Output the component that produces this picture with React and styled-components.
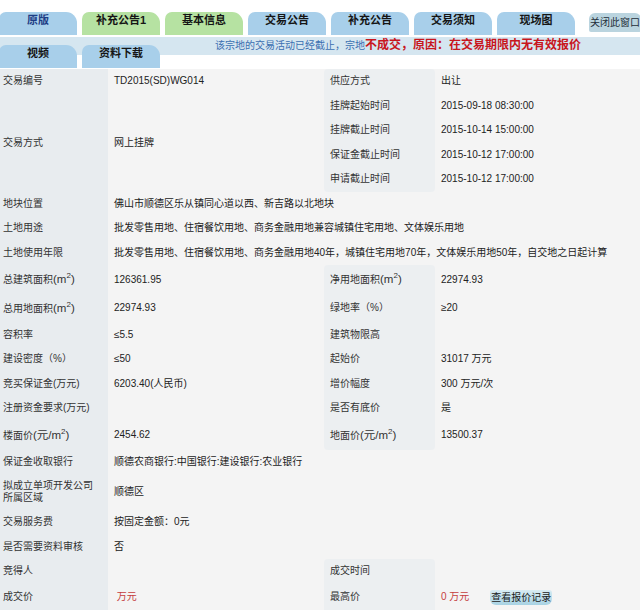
import React from "react";
import styled, { createGlobalStyle } from "styled-components";

const GlobalStyle = createGlobalStyle`
  body {
    margin: 0;
    background: #fff;
    font-family: "Liberation Sans", Arial, "Noto Sans CJK SC", sans-serif;
    font-size: 10px;
    color: #333;
  }
`;

const Page = styled.div`
  width: 640px;
  height: 610px;
  overflow: hidden;
  padding-top: 12px;
  box-sizing: border-box;
`;

const TabRow = styled.div`
  display: flex;
  gap: 5px;
  margin-left: -1px;
  align-items: flex-start;
`;

const Tab = styled.div`
  flex: none;
  width: 78px;
  height: 23px;
  box-sizing: border-box;
  padding-top: 1px;
  border-radius: 7px 11px 0 0;
  background: ${(p) => (p.$green ? "#b6e2a2" : "#a8cfea")};
  color: ${(p) => (p.$navy ? "#1d3d85" : "#151515")};
  font-size: 11px;
  font-weight: bold;
  line-height: 14px;
  text-align: center;
`;

const CloseTab = styled.div`
  flex: none;
  margin: 1px 0 0 9px;
  width: 52px;
  height: 19px;
  border-radius: 6px 6px 2px 2px;
  background: #bad4df;
  color: #1f2f3a;
  font-size: 10px;
  line-height: 19px;
  text-align: center;
`;

const SubRow = styled.div`
  display: flex;
  gap: 5px;
  margin: 2px 0 0 -1px;
  height: 31px;
  align-items: flex-end;
  background: linear-gradient(#d5e6f0 0 18px, transparent 18px);
`;

const Notice = styled.div`
  align-self: flex-start;
  margin-left: 50px;
  padding-top: 1px;
  line-height: 14px;
  white-space: nowrap;
  color: #3b6fb1;
  font-size: 10px;
`;

const NoticeStrong = styled.span`
  color: #c8161d;
  font-size: 12px;
  font-weight: bold;
`;

const Table = styled.table`
  width: 640px;
  margin-top: 1px;
  table-layout: fixed;
  border-collapse: separate;
  border-spacing: 0;
  background: #f4f4f4;
`;

const Row = styled.tr`
  height: ${(p) => p.$h || 24.5}px;
`;

const Label = styled.td`
  padding: 0 0 0 3px;
  background: #e8ecef;
  color: #333;
  line-height: 12px;
  vertical-align: middle;
`;

const Value = styled.td`
  padding: 0 0 0 6px;
  color: #222;
  line-height: 12px;
  vertical-align: middle;
  white-space: nowrap;
`;

const SideLabel = styled.td`
  padding: 0 0 0 6px;
  background: #eceff1;
  color: #333;
  line-height: 12px;
  vertical-align: middle;
  border-radius: ${(p) =>
    p.$round === "top" ? "4px 4px 0 0" : p.$round === "bottom" ? "0 0 4px 4px" : "0"};
`;

const Unit = styled.span`
  font-size: 11.5px;
`;

const Sup = styled.sup`
  font-size: 8px;
  line-height: 0;
  vertical-align: 5px;
`;

const Red = styled.span`
  color: #c53d3d;
`;

const QuoteButton = styled.span`
  display: inline-block;
  margin-left: 21px;
  padding: 0 1px;
  height: 15px;
  line-height: 15px;
  border-radius: 3px 3px 6px 6px;
  background: linear-gradient(#d9ecf3, #a7d2e3);
  color: #1a1a1a;
  font-size: 10px;
  vertical-align: middle;
`;

const M2 = () => (
  <Unit>
    (m<Sup>2</Sup>)
  </Unit>
);

const PerM2 = () => (
  <Unit>
    (元/m<Sup>2</Sup>)
  </Unit>
);

export default function App() {
  return (
    <Page>
      <GlobalStyle />
      <TabRow>
        <Tab $navy>原版</Tab>
        <Tab $green>补充公告1</Tab>
        <Tab $green>基本信息</Tab>
        <Tab>交易公告</Tab>
        <Tab>补充公告</Tab>
        <Tab>交易须知</Tab>
        <Tab>现场图</Tab>
        <CloseTab>关闭此窗口</CloseTab>
      </TabRow>
      <SubRow>
        <Tab>视频</Tab>
        <Tab>资料下载</Tab>
        <Notice>
          该宗地的交易活动已经截止，宗地
          <NoticeStrong>不成交，原因：在交易期限内无有效报价</NoticeStrong>
        </Notice>
      </SubRow>
      <Table>
        <colgroup>
          <col style={{ width: 108 }} />
          <col style={{ width: 216 }} />
          <col style={{ width: 111 }} />
          <col style={{ width: 205 }} />
        </colgroup>
        <tbody>
          <Row>
            <Label>交易编号</Label>
            <Value>TD2015(SD)WG014</Value>
            <SideLabel $round="top">供应方式</SideLabel>
            <Value>出让</Value>
          </Row>
          <Row>
            <Label rowSpan={4}>交易方式</Label>
            <Value rowSpan={4}>网上挂牌</Value>
            <SideLabel>挂牌起始时间</SideLabel>
            <Value>2015-09-18 08:30:00</Value>
          </Row>
          <Row>
            <SideLabel>挂牌截止时间</SideLabel>
            <Value>2015-10-14 15:00:00</Value>
          </Row>
          <Row>
            <SideLabel>保证金截止时间</SideLabel>
            <Value>2015-10-12 17:00:00</Value>
          </Row>
          <Row>
            <SideLabel $round="bottom">申请截止时间</SideLabel>
            <Value>2015-10-12 17:00:00</Value>
          </Row>
          <Row>
            <Label>地块位置</Label>
            <Value colSpan={3}>佛山市顺德区乐从镇同心道以西、新吉路以北地块</Value>
          </Row>
          <Row>
            <Label>土地用途</Label>
            <Value colSpan={3}>批发零售用地、住宿餐饮用地、商务金融用地兼容城镇住宅用地、文体娱乐用地</Value>
          </Row>
          <Row>
            <Label>土地使用年限</Label>
            <Value colSpan={3}>
              批发零售用地、住宿餐饮用地、商务金融用地40年，城镇住宅用地70年，文体娱乐用地50年，自交地之日起计算
            </Value>
          </Row>
          <Row $h={29}>
            <Label>
              总建筑面积<M2 />
            </Label>
            <Value>126361.95</Value>
            <SideLabel $round="top">
              净用地面积<M2 />
            </SideLabel>
            <Value>22974.93</Value>
          </Row>
          <Row $h={28.5}>
            <Label>
              总用地面积<M2 />
            </Label>
            <Value>22974.93</Value>
            <SideLabel>绿地率（%）</SideLabel>
            <Value>≥20</Value>
          </Row>
          <Row>
            <Label>容积率</Label>
            <Value>≤5.5</Value>
            <SideLabel>建筑物限高</SideLabel>
            <Value></Value>
          </Row>
          <Row>
            <Label>建设密度（%）</Label>
            <Value>≤50</Value>
            <SideLabel>起始价</SideLabel>
            <Value>31017 万元</Value>
          </Row>
          <Row>
            <Label>竞买保证金(万元)</Label>
            <Value>6203.40(人民币)</Value>
            <SideLabel>增价幅度</SideLabel>
            <Value>300 万元/次</Value>
          </Row>
          <Row>
            <Label>注册资金要求(万元)</Label>
            <Value></Value>
            <SideLabel>是否有底价</SideLabel>
            <Value>是</Value>
          </Row>
          <Row $h={29}>
            <Label>
              楼面价<PerM2 />
            </Label>
            <Value>2454.62</Value>
            <SideLabel $round="bottom">
              地面价<PerM2 />
            </SideLabel>
            <Value>13500.37</Value>
          </Row>
          <Row>
            <Label>保证金收取银行</Label>
            <Value colSpan={3}>顺德农商银行:中国银行:建设银行:农业银行</Value>
          </Row>
          <Row $h={36}>
            <Label>
              拟成立单项开发公司
              <br />
              所属区域
            </Label>
            <Value colSpan={3}>顺德区</Value>
          </Row>
          <Row>
            <Label>交易服务费</Label>
            <Value colSpan={3}>按固定金额：0元</Value>
          </Row>
          <Row>
            <Label>是否需要资料审核</Label>
            <Value colSpan={3}>否</Value>
          </Row>
          <Row>
            <Label>竞得人</Label>
            <Value></Value>
            <SideLabel $round="top">成交时间</SideLabel>
            <Value></Value>
          </Row>
          <Row $h={27}>
            <Label>成交价</Label>
            <Value>
              <Red>&nbsp;万元</Red>
            </Value>
            <SideLabel>最高价</SideLabel>
            <Value>
              <Red>0 万元</Red>
              <QuoteButton>查看报价记录</QuoteButton>
            </Value>
          </Row>
        </tbody>
      </Table>
    </Page>
  );
}
